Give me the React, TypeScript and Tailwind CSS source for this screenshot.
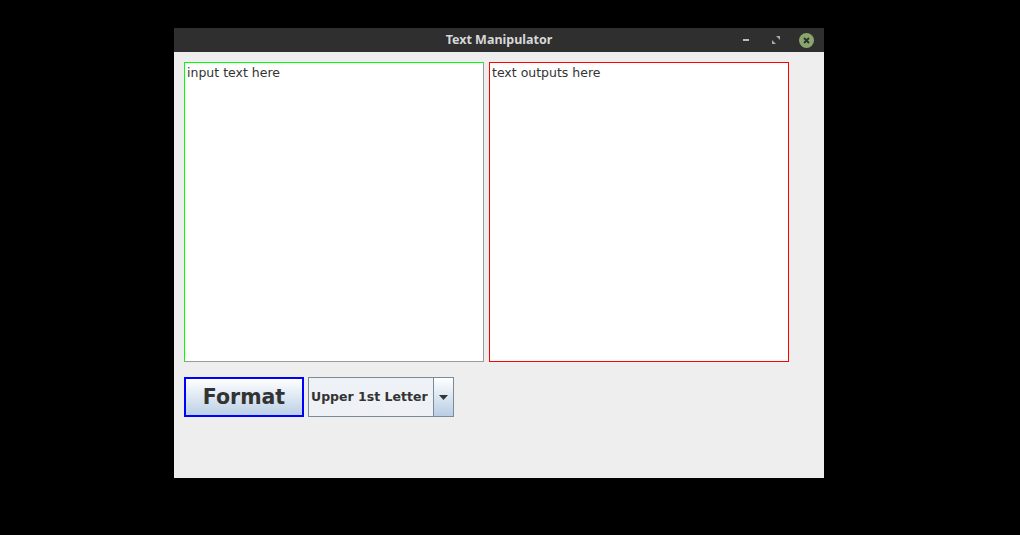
import React from 'react';

const App: React.FC = () => {
    return (
        <div className="w-[1020px] h-[535px] bg-black relative overflow-hidden" style={{ fontFamily: '"DejaVu Sans", sans-serif' }}>
            <div className="absolute left-[174px] top-[28px] w-[650px] h-[450px] flex flex-col bg-[#eeeeee]">
                {/* title bar */}
                <div className="h-[24px] bg-[#2f2f2f] flex items-center relative shrink-0">
                    <div className="flex-1 text-center text-[12.5px] font-bold text-[#d8d8d8] pt-[1px]" style={{ fontFamily: '"Noto Sans", sans-serif' }}>Text Manipulator</div>
                    <div className="absolute right-[3px] top-0 h-full flex items-center">
                        <div className="w-[30px] flex justify-center">
                            <div className="w-[6px] h-[2px] bg-[#bcbcbc]"></div>
                        </div>
                        <div className="w-[30px] flex justify-center">
                            <svg width="8" height="8" viewBox="0 0 8 8">
                                <path d="M4 0 L8 0 L8 4 Z M0 4 L4 8 L0 8 Z" fill="#a8a8a8" />
                            </svg>
                        </div>
                        <div className="w-[30px] flex justify-center">
                            <div className="w-[15px] h-[15px] rounded-full bg-[#8aa56d] flex items-center justify-center">
                                <svg width="7" height="7" viewBox="0 0 7 7">
                                    <path d="M1 1 L6 6 M6 1 L1 6" stroke="#2f2f2f" strokeWidth="1.8" />
                                </svg>
                            </div>
                        </div>
                    </div>
                </div>

                {/* content */}
                <div className="flex-1 pt-[10px] pl-[10px]">
                    <div className="flex gap-[5px]">
                        <div className="w-[300px] h-[300px] bg-white border border-[#00ff00] border-r-[#9a9a9a] border-b-[#9a9a9a] px-[2px] pt-[1px] text-[12.5px] text-[#333333] leading-[18px]">input text here</div>
                        <div className="w-[300px] h-[300px] bg-white border border-[#ff0000] px-[2px] pt-[1px] text-[12.5px] text-[#333333] leading-[18px]">text outputs here</div>
                    </div>
                    <div className="flex gap-[4px] mt-[15px]">
                        <button className="w-[120px] h-[40px] border-2 border-[#0000ff] bg-gradient-to-b from-white to-[#bcd0e6] text-[20.5px] font-bold text-[#333333] flex items-center justify-center">Format</button>
                        <div className="w-[146px] h-[40px] border border-[#7a8a99] flex">
                            <div className="flex-1 bg-[#eef1f5] border-r border-[#7a8a99] text-[12.5px] font-bold text-[#333333] flex items-center pl-[2px]">Upper 1st Letter</div>
                            <div className="w-[19px] bg-gradient-to-b from-white to-[#b8cde4] flex items-center justify-center">
                                <svg width="9" height="5" viewBox="0 0 9 5">
                                    <path d="M0 0 L9 0 L4.5 5 Z" fill="#333333" />
                                </svg>
                            </div>
                        </div>
                    </div>
                </div>
            </div>
        </div>
    );
};

export default App;
